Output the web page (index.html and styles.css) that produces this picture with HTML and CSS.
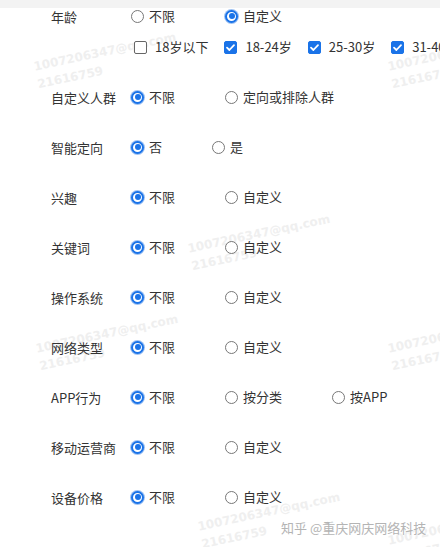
FILE: index.html
```html
<!DOCTYPE html>
<html lang="zh">
<head>
<meta charset="utf-8">
<link rel="stylesheet" href="styles.css">
</head>
<body>
<div class="topband"></div>
<div class="form">
  <div class="row row-first">
    <div class="label">年龄</div>
    <div class="opts">
      <span class="opt"><span class="radio"></span>不限</span>
      <span class="opt"><span class="radio on"></span>自定义</span>
    </div>
  </div>
  <div class="row row-checks">
    <div class="label"></div>
    <div class="checks">
      <span class="chk"><span class="box"></span>18岁以下</span>
      <span class="chk"><span class="box on"><svg viewBox="0 0 13 13" width="13" height="13"><path d="M3 6.6 L5.4 9 L10 4.2" fill="none" stroke="#fff" stroke-width="1.8" stroke-linecap="round" stroke-linejoin="round"/></svg></span>18-24岁</span>
      <span class="chk"><span class="box on"><svg viewBox="0 0 13 13" width="13" height="13"><path d="M3 6.6 L5.4 9 L10 4.2" fill="none" stroke="#fff" stroke-width="1.8" stroke-linecap="round" stroke-linejoin="round"/></svg></span>25-30岁</span>
      <span class="chk"><span class="box on"><svg viewBox="0 0 13 13" width="13" height="13"><path d="M3 6.6 L5.4 9 L10 4.2" fill="none" stroke="#fff" stroke-width="1.8" stroke-linecap="round" stroke-linejoin="round"/></svg></span>31-40岁</span>
    </div>
  </div>
  <div class="row">
    <div class="label">自定义人群</div>
    <div class="opts">
      <span class="opt"><span class="radio on"></span>不限</span>
      <span class="opt"><span class="radio"></span>定向或排除人群</span>
    </div>
  </div>
  <div class="row">
    <div class="label">智能定向</div>
    <div class="opts">
      <span class="opt"><span class="radio on"></span>否</span>
      <span class="opt"><span class="radio"></span>是</span>
    </div>
  </div>
  <div class="row">
    <div class="label">兴趣</div>
    <div class="opts">
      <span class="opt"><span class="radio on"></span>不限</span>
      <span class="opt"><span class="radio"></span>自定义</span>
    </div>
  </div>
  <div class="row">
    <div class="label">关键词</div>
    <div class="opts">
      <span class="opt"><span class="radio on"></span>不限</span>
      <span class="opt"><span class="radio"></span>自定义</span>
    </div>
  </div>
  <div class="row">
    <div class="label">操作系统</div>
    <div class="opts">
      <span class="opt"><span class="radio on"></span>不限</span>
      <span class="opt"><span class="radio"></span>自定义</span>
    </div>
  </div>
  <div class="row">
    <div class="label">网络类型</div>
    <div class="opts">
      <span class="opt"><span class="radio on"></span>不限</span>
      <span class="opt"><span class="radio"></span>自定义</span>
    </div>
  </div>
  <div class="row">
    <div class="label">APP行为</div>
    <div class="opts">
      <span class="opt"><span class="radio on"></span>不限</span>
      <span class="opt"><span class="radio"></span>按分类</span>
      <span class="opt"><span class="radio"></span>按APP</span>
    </div>
  </div>
  <div class="row">
    <div class="label">移动运营商</div>
    <div class="opts">
      <span class="opt"><span class="radio on"></span>不限</span>
      <span class="opt"><span class="radio"></span>自定义</span>
    </div>
  </div>
  <div class="row">
    <div class="label">设备价格</div>
    <div class="opts">
      <span class="opt"><span class="radio on"></span>不限</span>
      <span class="opt"><span class="radio"></span>自定义</span>
    </div>
  </div>
</div>

<div class="wm wm1">1007206347@qq.com<br>21616759</div>
<div class="wm wm2">1007206347@qq.com<br>21616759</div>
<div class="wm wm3">1007206347@qq.com<br>21616759</div>
<div class="wm wm4">1007206347@qq.com<br>21616759</div>
<div class="wm wm5">1007206347@qq.com<br>21616759</div>
<div class="wm wm6">1007206347@qq.com<br>21616759</div>
<div class="wm wm7">1007206347@qq.com<br>21616759</div>

<div class="zhihu">知乎 @重庆网庆网络科技</div>
</body>
</html>
```

FILE: styles.css
```css
html, body {
  margin: 0;
  padding: 0;
  background: #fff;
}
body {
  width: 440px;
  height: 547px;
  overflow: hidden;
  position: relative;
  font-family: "Noto Sans CJK SC", "Noto Sans", sans-serif;
  font-size: 13px;
  color: #333;
}
.topband {
  position: absolute;
  left: 0;
  top: 0;
  width: 440px;
  height: 8px;
  background: #f3f3f3;
  z-index: 3;
}
.form {
  display: flex;
  flex-direction: column;
  position: relative;
  z-index: 2;
}
.row {
  display: flex;
  align-items: center;
  height: 50px;
}
.row-first {
  height: 32px;
}
.row-checks {
  height: 30px;
  margin-bottom: 10px;
}
.label {
  width: 80px;
  padding-left: 51px;
  text-align: left;
  flex: none;
  color: #333;
  white-space: nowrap;
}
.opts {
  display: flex;
  align-items: center;
  gap: 50px;
  white-space: nowrap;
}
.opt {
  display: inline-flex;
  align-items: center;
  gap: 5px;
  line-height: 18px;
}
.radio {
  width: 13px;
  height: 13px;
  box-sizing: border-box;
  border: 1px solid #777;
  border-radius: 50%;
  flex: none;
  position: relative;
  background: #fff;
}
.radio.on {
  border: 2px solid #1a73e8;
  box-shadow: 0 0 0 1px #9fc3f3;
}
.radio.on::after {
  content: "";
  position: absolute;
  left: 1.5px;
  top: 1.5px;
  width: 6px;
  height: 6px;
  border-radius: 50%;
  background: #1a73e8;
}
.checks {
  display: flex;
  align-items: center;
  gap: 16px;
  margin-left: 3px;
  white-space: nowrap;
}
.chk {
  display: inline-flex;
  align-items: center;
  gap: 8px;
  line-height: 18px;
}
.box {
  width: 13px;
  height: 13px;
  box-sizing: border-box;
  border: 1px solid #666;
  border-radius: 2px;
  flex: none;
  display: flex;
  background: #fff;
}
.box.on {
  background: #1a73e8;
  border-color: #1a73e8;
}
.box svg {
  display: block;
  margin: -1px;
}
.wm {
  position: absolute;
  z-index: 1;
  font-family: "DejaVu Sans", sans-serif;
  font-weight: bold;
  font-size: 12px;
  line-height: 18px;
  color: #efefef;
  transform: rotate(-12deg);
  transform-origin: 0 0;
  white-space: nowrap;
  pointer-events: none;
}
.wm1 { left: 32px; top: 58px; }
.wm2 { left: 186px; top: 240px; }
.wm3 { left: 386px; top: 58px; }
.wm4 { left: 34px; top: 340px; }
.wm5 { left: 386px; top: 340px; }
.wm6 { left: 196px; top: 518px; }
.wm7 { left: 386px; top: 532px; }
.zhihu {
  position: absolute;
  z-index: 4;
  left: 281px;
  top: 518px;
  font-size: 13px;
  line-height: 20px;
  color: #b4b4b4;
  text-shadow: 0 0 2px #fff, 0 0 2px #fff;
  white-space: nowrap;
}
```
